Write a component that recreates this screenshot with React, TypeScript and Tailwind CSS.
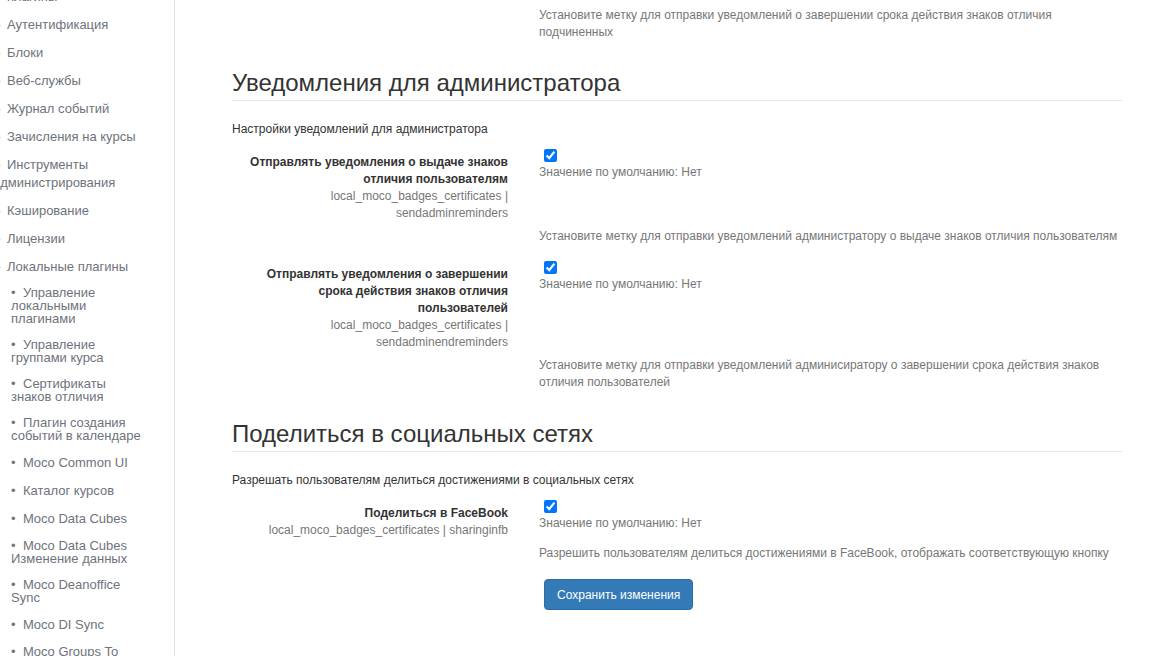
import React from "react"

type NavItem = { label: string; sub?: boolean; one?: boolean }

const navItems: NavItem[] = [
  { label: "Аутентификация" },
  { label: "Блоки" },
  { label: "Веб-службы" },
  { label: "Журнал событий" },
  { label: "Зачисления на курсы" },
  { label: "Инструменты администрирования" },
  { label: "Кэширование" },
  { label: "Лицензии" },
  { label: "Локальные плагины" },
]

const subItems: NavItem[] = [
  { label: "Управление локальными плагинами" },
  { label: "Управление группами курса" },
  { label: "Сертификаты знаков отличия" },
  { label: "Плагин создания событий в календаре" },
  { label: "Moco Common UI", one: true },
  { label: "Каталог курсов", one: true },
  { label: "Moco Data Cubes", one: true },
  { label: "Moco Data Cubes Изменение данных" },
  { label: "Moco Deanoffice Sync" },
  { label: "Moco DI Sync", one: true },
  { label: "Moco Groups To" },
]

function Sidebar() {
  return (
    <aside className="w-[175px] shrink-0 h-[656px] overflow-hidden border-r border-[#dfe5ec] text-[13px] text-[#6e737c]">
      <div className="-ml-[7px] -mt-[17px]">
        <div className="leading-[18px] py-[5px] pl-[14px]">плагины</div>
        {navItems.map((item) => (
          <div key={item.label} className="leading-[18px] py-[5px] pr-[20px]">
            <span className="inline-block w-[14px] text-center text-[#d0d4da]">·</span>
            {item.label}
          </div>
        ))}
        <div className="-mt-[2px]">
          {subItems.map((item) => (
            <div
              key={item.label}
              className={`pl-[18px] pr-[30px] leading-[13px] ${item.one ? "py-[7.5px]" : "py-[6.5px]"}`}
            >
              <span className="inline-block w-[12px] text-[#777]">•</span>
              {item.label}
            </div>
          ))}
        </div>
      </div>
    </aside>
  )
}

type Setting = {
  label: string
  name: string
  description: string
}

function SettingRow({ s }: { s: Setting }) {
  return (
    <div className="grid grid-cols-[276px_1fr] gap-x-[31px]">
      <div className="text-right pt-[5px]">
        <div className="font-bold text-[#333] leading-[17px]">{s.label}</div>
        <div className="text-[#777] leading-[17px]">{s.name}</div>
      </div>
      <div>
        <input type="checkbox" defaultChecked className="block ml-[5px] w-[13px] h-[13px] m-0" />
        <div className="text-[#777] leading-[17px] mt-[2px]">Значение по умолчанию: Нет</div>
      </div>
      <div />
      <div className="text-[#777] leading-[17px] mt-[6px]">{s.description}</div>
    </div>
  )
}

function Section({ title, intro, children }: { title: string; intro: string; children: React.ReactNode }) {
  return (
    <section>
      <h3 className="text-[24px] leading-[30px] text-[#333] pb-[2px] border-b border-[#e5e5e5]">{title}</h3>
      <p className="mt-[20px] leading-[17px] text-[#333]">{intro}</p>
      {children}
    </section>
  )
}

export default function App() {
  const adminSettings: Setting[] = [
    {
      label: "Отправлять уведомления о выдаче знаков отличия пользователям",
      name: "local_moco_badges_certificates | sendadminreminders",
      description: "Установите метку для отправки уведомлений администратору о выдаче знаков отличия пользователям",
    },
    {
      label: "Отправлять уведомления о завершении срока действия знаков отличия пользователей",
      name: "local_moco_badges_certificates | sendadminendreminders",
      description:
        "Установите метку для отправки уведомлений админисиратору о завершении срока действия знаков отличия пользователей",
    },
  ]

  return (
    <div className="flex w-[1175px] h-[656px] overflow-hidden bg-white font-['Liberation_Sans',Arial,sans-serif] text-[12px]">
      <Sidebar />
      <main className="flex-1 pl-[57px] pr-[53px]">
        <div className="grid grid-cols-[276px_1fr] gap-x-[31px] pt-[7px]">
          <div />
          <div className="text-[#777] leading-[17px]">
            Установите метку для отправки уведомлений о завершении срока действия знаков отличия подчиненных
          </div>
        </div>

        <div className="mt-[27px]">
          <Section title="Уведомления для администратора" intro="Настройки уведомлений для администратора">
            <div className="mt-[11px] flex flex-col gap-[16px]">
              {adminSettings.map((s) => (
                <SettingRow key={s.name} s={s} />
              ))}
            </div>
          </Section>
        </div>

        <div className="mt-[28px]">
          <Section
            title="Поделиться в социальных сетях"
            intro="Разрешать пользователям делиться достижениями в социальных сетях"
          >
            <div className="mt-[11px]">
              <SettingRow
                s={{
                  label: "Поделиться в FaceBook",
                  name: "local_moco_badges_certificates | sharinginfb",
                  description:
                    "Разрешить пользователям делиться достижениями в FaceBook, отображать соответствующую кнопку",
                }}
              />
            </div>
            <div className="grid grid-cols-[276px_1fr] gap-x-[31px] mt-[17px]">
              <div />
              <div>
                <button className="ml-[5px] h-[31px] px-[12px] rounded-[4px] bg-[#337ab7] border border-[#2e6da4] text-white text-[12px]">
                  Сохранить изменения
                </button>
              </div>
            </div>
          </Section>
        </div>
      </main>
    </div>
  )
}
